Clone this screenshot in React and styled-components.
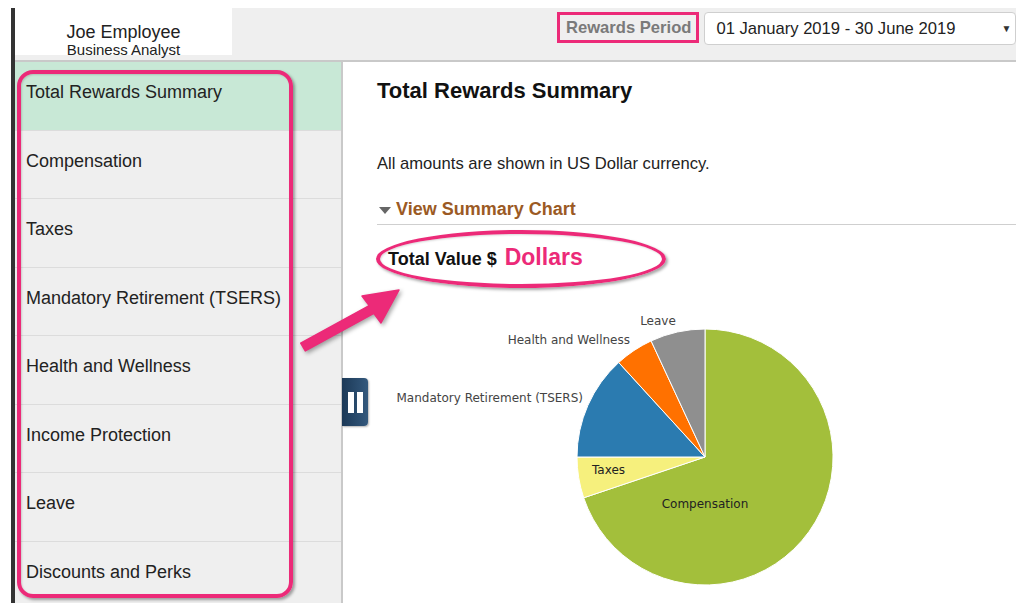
import React from "react";
import styled, { createGlobalStyle, css } from "styled-components";

const PINK = "#ec2a78";

const GlobalStyle = createGlobalStyle`
  html, body {
    margin: 0;
    padding: 0;
    background: #fff;
  }
  body {
    font-family: "Liberation Sans", Arial, sans-serif;
    color: #222;
  }
`;

const Page = styled.div`
  position: relative;
  width: 1016px;
  height: 603px;
  overflow: hidden;
  background: #fff;
`;

const Frame = styled.div`
  display: flex;
  flex-direction: column;
  height: 595px;
  margin: 8px 0 0 11px;
  border-left: 4px solid #333;
`;

const Header = styled.div`
  display: flex;
  align-items: flex-start;
  height: 52px;
  overflow: hidden;
  background: #efefef;
  border-bottom: 2px solid #c9c9c9;
`;

const NameCard = styled.div`
  display: flex;
  flex-direction: column;
  align-items: center;
  flex-shrink: 0;
  box-sizing: border-box;
  width: 217px;
  height: 47px;
  padding-top: 14px;
  background: #fff;
`;

const Name = styled.div`
  font-size: 18px;
  line-height: 20px;
  color: #222;
`;

const JobTitle = styled.div`
  font-size: 15px;
  line-height: 16px;
  color: #222;
`;

const PeriodGroup = styled.div`
  display: flex;
  align-items: flex-start;
  flex-shrink: 0;
  gap: 5px;
  margin: 4px 0 0 325px;
`;

const PeriodLabel = styled.div`
  display: flex;
  align-items: center;
  box-sizing: border-box;
  height: 31px;
  padding: 0 5px 0 6px;
  border: 3px solid ${PINK};
  font-size: 16.6px;
  font-weight: bold;
  color: #7a7a7a;
  white-space: nowrap;
`;

const PeriodSelect = styled.div`
  display: flex;
  align-items: center;
  justify-content: space-between;
  flex-shrink: 0;
  box-sizing: border-box;
  width: 312px;
  height: 33px;
  padding: 0 4px 0 11px;
  background: #fff;
  border: 1px solid #cfcfcf;
  border-radius: 4px;
  font-size: 16.6px;
  color: #222;
  white-space: nowrap;
`;

const Caret = styled.span`
  font-size: 10px;
  color: #333;
`;

const Body = styled.div`
  position: relative;
  display: flex;
  flex: 1;
  min-height: 0;
`;

const Nav = styled.nav`
  flex-shrink: 0;
  box-sizing: border-box;
  width: 328px;
  background: #efefef;
  border-right: 2px solid #c9c9c9;
`;

const NavItem = styled.div`
  display: flex;
  align-items: center;
  box-sizing: border-box;
  height: 68.5px;
  padding: 0 0 6px 11px;
  border-bottom: 1px solid #dcdcdc;
  font-size: 18px;
  color: #222;
  white-space: nowrap;
  ${(p) =>
    p.$active &&
    css`
      background: #c8e8d6;
    `}
`;

const Main = styled.main`
  flex: 1;
  padding: 16px 0 0 34px;
`;

const Title = styled.h1`
  margin: 0;
  font-size: 22px;
  line-height: 26px;
  font-weight: bold;
  color: #111;
`;

const Note = styled.p`
  margin: 50px 0 0;
  font-size: 16.6px;
  line-height: 20px;
  color: #222;
`;

const SectionToggle = styled.div`
  display: flex;
  align-items: center;
  gap: 5px;
  margin-top: 24px;
  padding: 0 0 4px 2px;
  border-bottom: 1px solid #cfcfcf;
  font-size: 18px;
  line-height: 22px;
  font-weight: bold;
  color: #9b5a24;
`;

const Triangle = styled.span`
  width: 0;
  height: 0;
  margin-top: 2px;
  border-left: 6.5px solid transparent;
  border-right: 6.5px solid transparent;
  border-top: 7px solid #666;
`;

const ValueRow = styled.div`
  display: flex;
  align-items: baseline;
  gap: 8px;
  margin: 20px 0 0 11px;
  line-height: 24px;
`;

const ValueLabel = styled.span`
  font-size: 18px;
  font-weight: bold;
  color: #111;
`;

const ValueUnit = styled.span`
  font-size: 23px;
  font-weight: bold;
  color: ${PINK};
`;

const Chart = styled.svg`
  display: block;
  margin: 31px 0 0 -1px;
  overflow: visible;
`;

const ChartLabel = styled.text`
  font-family: "DejaVu Sans", Verdana, sans-serif;
  font-size: 12px;
  fill: ${(p) => p.$tone || "#444"};
`;

const CollapseHandle = styled.div`
  position: absolute;
  left: 327px;
  top: 316px;
  display: flex;
  justify-content: center;
  gap: 3px;
  align-items: center;
  width: 26px;
  height: 48px;
  border-radius: 0 4px 4px 0;
  background: linear-gradient(to right, #1c3957, #34597d);
  box-shadow: 1px 1px 2px rgba(0, 0, 0, 0.3);

  span {
    width: 6px;
    height: 21px;
    background: #fff;
  }
`;

/* pink call-out marks drawn on top of the page */
const Outline = styled.div`
  position: absolute;
  box-sizing: border-box;
  left: ${(p) => p.$x}px;
  top: ${(p) => p.$y}px;
  width: ${(p) => p.$w}px;
  height: ${(p) => p.$h}px;
  border: ${(p) => p.$stroke}px solid ${PINK};
  border-radius: ${(p) => p.$radius};
  box-shadow: 2px 2px 3px rgba(0, 0, 0, 0.35), inset 1px 1px 2px rgba(0, 0, 0, 0.15);
  pointer-events: none;
`;

const Pointer = styled.svg`
  position: absolute;
  left: 290px;
  top: 280px;
  overflow: visible;
  filter: drop-shadow(2px 2px 2px rgba(0, 0, 0, 0.35));
  pointer-events: none;
`;

const navItems = [
  "Total Rewards Summary",
  "Compensation",
  "Taxes",
  "Mandatory Retirement (TSERS)",
  "Health and Wellness",
  "Income Protection",
  "Leave",
  "Discounts and Perks",
];

// share of total, in degrees, going clockwise from 12 o'clock
const slices = [
  { name: "Compensation", deg: 251.4, color: "#a3bf3b" },
  { name: "Taxes", deg: 18.6, color: "#f6f07d" },
  { name: "Mandatory Retirement (TSERS)", deg: 47.6, color: "#2b7bb0" },
  { name: "Health and Wellness", deg: 17.5, color: "#ff7100" },
  { name: "Leave", deg: 24.9, color: "#8f8f8f" },
];

const CX = 329;
const CY = 155;
const R = 128;

function pointAt(deg) {
  const rad = (deg * Math.PI) / 180;
  return [CX + R * Math.sin(rad), CY - R * Math.cos(rad)];
}

function slicePath(start, sweep) {
  const [x1, y1] = pointAt(start);
  const [x2, y2] = pointAt(start + sweep);
  const large = sweep > 180 ? 1 : 0;
  return `M${CX},${CY} L${x1.toFixed(1)},${y1.toFixed(1)} A${R},${R} 0 ${large} 1 ${x2.toFixed(1)},${y2.toFixed(1)} Z`;
}

function PieChart() {
  let start = 0;
  const paths = slices.map((s) => {
    const d = slicePath(start, s.deg);
    start += s.deg;
    return <path key={s.name} d={d} fill={s.color} stroke="#fff" strokeWidth="1" />;
  });
  return (
    <Chart width="460" height="290" viewBox="0 0 460 290">
      {paths}
      <ChartLabel x="282" y="23" textAnchor="middle">Leave</ChartLabel>
      <ChartLabel x="254" y="42" textAnchor="end">Health and Wellness</ChartLabel>
      <ChartLabel x="207" y="100" textAnchor="end">Mandatory Retirement (TSERS)</ChartLabel>
      <ChartLabel x="216" y="172" $tone="#222">Taxes</ChartLabel>
      <ChartLabel x="329" y="206" textAnchor="middle" $tone="#222">Compensation</ChartLabel>
    </Chart>
  );
}

export default function App() {
  return (
    <>
      <GlobalStyle />
      <Page>
        <Frame>
          <Header>
            <NameCard>
              <Name>Joe Employee</Name>
              <JobTitle>Business Analyst</JobTitle>
            </NameCard>
            <PeriodGroup>
              <PeriodLabel>Rewards Period</PeriodLabel>
              <PeriodSelect>
                01 January 2019 - 30 June 2019
                <Caret>▼</Caret>
              </PeriodSelect>
            </PeriodGroup>
          </Header>
          <Body>
            <Nav>
              {navItems.map((item, i) => (
                <NavItem key={item} $active={i === 0}>
                  {item}
                </NavItem>
              ))}
            </Nav>
            <Main>
              <Title>Total Rewards Summary</Title>
              <Note>All amounts are shown in US Dollar currency.</Note>
              <SectionToggle>
                <Triangle />
                View Summary Chart
              </SectionToggle>
              <ValueRow>
                <ValueLabel>Total Value $</ValueLabel>
                <ValueUnit>Dollars</ValueUnit>
              </ValueRow>
              <PieChart />
            </Main>
            <CollapseHandle>
              <span />
              <span />
            </CollapseHandle>
          </Body>
        </Frame>

        <Outline $x={17} $y={70} $w={276} $h={528} $stroke={4} $radius="16px" />
        <Outline $x={376} $y={230} $w={290} $h={58} $stroke={4} $radius="50%" />
        <Pointer width="120" height="80" viewBox="0 0 120 80">
          <polygon
            points="10.7,63.1 79.2,25.6 72,16 109,10 91,43 83.8,33.4 15.3,70.9"
            fill={PINK}
            stroke={PINK}
            strokeWidth="1.5"
            strokeLinejoin="round"
          />
        </Pointer>
      </Page>
    </>
  );
}
